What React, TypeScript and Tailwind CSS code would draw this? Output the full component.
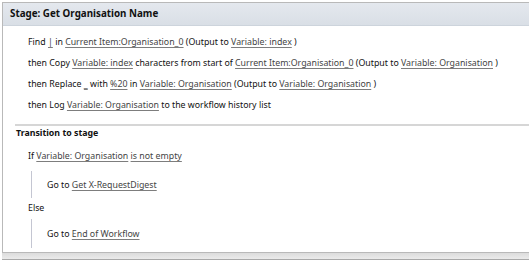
import type { ReactNode } from 'react'

const L = ({ children }: { children: ReactNode }) => (
  <span className="text-[#444] underline decoration-[#7d7d7d] underline-offset-[1.5px]">{children}</span>
)

const Row = ({ children, className = '' }: { children: ReactNode; className?: string }) => (
  <div className={`h-[21px] whitespace-nowrap leading-[21px] text-[#111] ${className}`}>{children}</div>
)

const Branch = ({ children, className = '' }: { children: ReactNode; className?: string }) => (
  <div className={`ml-[28px] flex items-center border-l border-[#c4c6d2] ${className}`}>
    <div className="whitespace-nowrap pl-[15px] text-[#111]">{children}</div>
  </div>
)

const App = () => {
  return (
    <div className="h-[260px] w-[529px] overflow-hidden bg-white text-[8.8px] font-['Noto_Sans',sans-serif]">
      <div className="ml-[2px] mt-[2px] h-[251px] border-b border-l border-t border-[#b9b9b9]">
        <div className="flex h-[23px] items-center border-b border-[#cdd4dc] bg-gradient-to-b from-[#e4e8ee] to-[#d9dfe6] pl-[7px] text-[9.8px] font-bold text-[#111]">
          Stage: Get Organisation Name
        </div>

        <div className="pl-[25px] pt-[6px]">
          <Row>
            Find <L>|</L> in <L>Current Item:Organisation_0</L> (Output to <L>Variable: index</L> )
          </Row>
          <Row>
            then Copy <L>Variable: index</L> characters from start of <L>Current Item:Organisation_0</L> (Output to{' '}
            <L>Variable: Organisation</L> )
          </Row>
          <Row>
            then Replace <L>_</L> with <L>%20</L> in <L>Variable: Organisation</L> (Output to <L>Variable: Organisation</L> )
          </Row>
          <Row>
            then Log <L>Variable: Organisation</L> to the workflow history list
          </Row>
        </div>

        <div className="ml-[12px] mt-[8px] h-[2px] bg-[#d6d6d6]" />

        <div className="pl-[13px]">
          <div className="h-[14px] font-bold leading-[14px] text-[#111]">Transition to stage</div>
          <div className="pl-[12px]">
            <Row className="mt-[6px]">
              If <L>Variable: Organisation</L> <L>is not empty</L>
            </Row>
          </div>
        </div>

        <Branch className="mt-[4px] h-[27px] pt-[3px]">
          Go to <L>Get X-RequestDigest</L>
        </Branch>
        <Row className="h-[18px] pl-[25px] leading-[20px]">Else</Row>
        <Branch className="h-[29px] pt-[2px]">
          Go to <L>End of Workflow</L>
        </Branch>
      </div>
      <div className="ml-[2px] h-[7px] border-b border-[#a9a9a9] bg-gradient-to-b from-[#dcdcdc] to-[#ebebeb]" />
    </div>
  )
}

export default App
